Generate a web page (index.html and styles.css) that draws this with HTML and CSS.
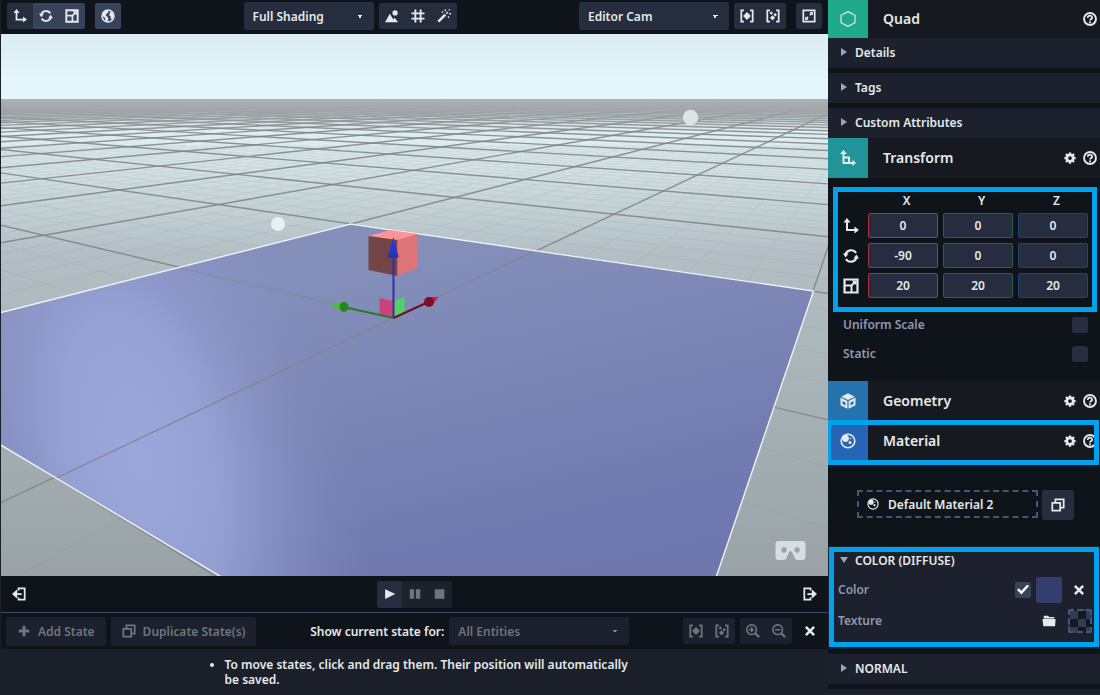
FILE: index.html
```html
<!DOCTYPE html>
<html lang="en">
<head>
    <meta charset="UTF-8">
    <meta name="viewport" content="width=device-width, initial-scale=1.0">
    <title>Scene Editor</title>
    <link rel="stylesheet" href="styles.css">
</head>
<body>
    <!-- icon set -->
    <svg class="sprite" aria-hidden="true">
        <symbol id="i-move" viewBox="0 0 16 16"><path d="M4 4v8h8" fill="none" stroke="currentColor" stroke-width="2"/><path d="M4 0L.5 4.500h7zM16 12l-4.500-3.500v7z" fill="currentColor"/></symbol>
        <symbol id="i-rotate" viewBox="0 0 16 16"><path d="M2.400 7A5.800 5.800 0 0 1 13 5M13.600 9A5.800 5.800 0 0 1 3 11" fill="none" stroke="currentColor" stroke-width="2.200"/><path d="M0 5.500h5.600L2.600 9.500zM10.400 10.500H16l-2.600-4z" fill="currentColor"/></symbol>
        <symbol id="i-scale" viewBox="0 0 16 16"><path d="M1.500 1.500h13v13h-13z" fill="none" stroke="currentColor" stroke-width="2.200"/><path d="M2 7.500h6.500V14M8.500 7.500l4-4" fill="none" stroke="currentColor" stroke-width="2"/><path d="M8.500 2.500h5V7.500z" fill="currentColor"/></symbol>
        <symbol id="i-globe" viewBox="0 0 16 16"><circle cx="8" cy="8" r="6.800" fill="none" stroke="currentColor" stroke-width="1.800"/><path d="M2 5l3-3 3-.5.5 2.500L6.500 5l-1 2.500L7.500 9l1 2-1 3.500L5 13l-.5-3L2 8zM10 4l2-1 2.500 4-.5 3-2 2-1-1.500.5-1.500-2-1.500z" fill="currentColor"/></symbol>
        <symbol id="i-image" viewBox="0 0 16 16"><path d="M0 15l5.500-9.500L9.500 12l1.500-2 4 5z" fill="currentColor"/><circle cx="11.500" cy="4.500" r="3" fill="currentColor"/></symbol>
        <symbol id="i-grid" viewBox="0 0 16 16"><path d="M5 .5v15M11 .5v15M.5 5h15M.5 11h15" stroke="currentColor" stroke-width="2.200"/></symbol>
        <symbol id="i-wand" viewBox="0 0 16 16"><path d="M1.500 14.500l8-8" stroke="currentColor" stroke-width="3"/><path d="M10.500 5.500l2-2M9.500 .5v2M14.500 .5l-1 1M14 5.500h2M12.500 8.500l1.200 1.500M5.500 3l1.500 1" stroke="currentColor" stroke-width="1.600"/></symbol>
        <symbol id="i-focus" viewBox="0 0 16 16"><path d="M4.500 1.500h-3v13h3M11.500 1.500h3v13h-3" fill="none" stroke="currentColor" stroke-width="2"/><path d="M8 3.500l4.500 4.500L8 12.500 3.500 8z" fill="currentColor"/></symbol>
        <symbol id="i-focusall" viewBox="0 0 16 16"><path d="M4.500 1.500h-3v13h3M11.500 1.500h3v13h-3" fill="none" stroke="currentColor" stroke-width="2"/><path d="M6 2.500l2 2-2 2-2-2zM10.500 4.500l2 2-2 2-2-2zM7.500 7l3 3-3 3-3-3z" fill="currentColor"/></symbol>
        <symbol id="i-expand" viewBox="0 0 16 16"><path d="M1.500 1.500h13v13h-13z" fill="none" stroke="currentColor" stroke-width="2"/><path d="M8.500 3.500h4v4zM3.500 8.500v4h4z" fill="currentColor"/><path d="M11 5L9 7M7 9l-2 2" stroke="currentColor" stroke-width="2"/></symbol>
        <symbol id="i-help" viewBox="0 0 16 16"><circle cx="8" cy="8" r="6.800" fill="none" stroke="currentColor" stroke-width="2.200"/><path d="M5.600 6.600a2.400 2.200 0 1 1 3.600 1.600Q8 8.700 8 9.800" fill="none" stroke="currentColor" stroke-width="2"/><circle cx="8" cy="11.800" r="1.200" fill="currentColor"/></symbol>
        <symbol id="i-gear" viewBox="0 0 16 16"><circle cx="8" cy="8" r="4.300" fill="none" stroke="currentColor" stroke-width="3.600"/><path d="M8 .5v3M8 12.500v3M.5 8h3M12.500 8h3M2.600 2.600l2 2M11.400 11.400l2 2M2.600 13.400l2-2M11.400 4.600l2-2" stroke="currentColor" stroke-width="3"/></symbol>
        <symbol id="i-hexagon" viewBox="0 0 16 16"><path d="M8 .6l7 3.700v7.400l-7 3.700-7-3.700V4.300z" fill="none" stroke="currentColor" stroke-width="1.200"/></symbol>
        <symbol id="i-transform" viewBox="0 0 16 16"><path d="M3.500 3v10h10M3.500 7.500h5.500v5" fill="none" stroke="currentColor" stroke-width="2"/><path d="M3.500 0L0 4h7zM16 13L12.500 9.500v6.500z" fill="currentColor"/></symbol>
        <symbol id="i-cube" viewBox="0 0 16 16"><path d="M8 .3L14.800 3.700 8 7 1.200 3.700zM.5 4.600L7.400 8v7.800L.5 12.300zM15.500 4.600L8.600 8v7.800l6.900-3.500z" fill="currentColor"/><path d="M2.500 8l3 1.500v3l-3-1.500zM13.500 8l-3 1.500v3l3-1.500z" fill="#2472ae"/></symbol>
        <symbol id="i-sphere" viewBox="0 0 16 16"><circle cx="8" cy="8" r="6.800" fill="none" stroke="currentColor" stroke-width="1.600"/><circle cx="5.500" cy="5.500" r="3.400" fill="currentColor"/><circle cx="10" cy="9.500" r="1.500" fill="currentColor"/><circle cx="10.500" cy="5.500" r=".8" fill="currentColor"/></symbol>
        <symbol id="i-copy" viewBox="0 0 16 16"><path d="M1.500 5.500h9v9h-9zM5 4.500v-3h9.500v9.500h-3" fill="none" stroke="currentColor" stroke-width="2"/></symbol>
        <symbol id="i-folder" viewBox="0 0 16 16"><path d="M2 2h5l1 1.500h6V5H2zM.5 5.800h15L15 14H1.500z" fill="currentColor"/></symbol>
        <symbol id="i-close" viewBox="0 0 16 16"><path d="M2.500 2.500l11 11M13.500 2.500l-11 11" stroke="currentColor" stroke-width="3.400"/></symbol>
        <symbol id="i-plus" viewBox="0 0 16 16"><path d="M8 2v12M2 8h12" stroke="currentColor" stroke-width="3.400"/></symbol>
        <symbol id="i-left" viewBox="0 0 16 16"><path d="M7.500 4V1.500h7v13h-7V12M4 8h7" fill="none" stroke="currentColor" stroke-width="2"/><path d="M6 2.500v11L0 8z" fill="currentColor"/></symbol>
        <symbol id="i-right" viewBox="0 0 16 16"><path d="M8.500 4V1.500h-7v13h7V12M12 8H5" fill="none" stroke="currentColor" stroke-width="2"/><path d="M10 2.500v11L16 8z" fill="currentColor"/></symbol>
        <symbol id="i-play" viewBox="0 0 16 16"><path d="M1.500 1.500L15 8 1.500 14.500z" fill="currentColor"/></symbol>
        <symbol id="i-pause" viewBox="0 0 16 16"><path d="M2 2.500h5v11H2zM9 2.500h5v11H9z" fill="currentColor"/></symbol>
        <symbol id="i-stop" viewBox="0 0 16 16"><path d="M2 2.500h11v11H2z" fill="currentColor"/></symbol>
        <symbol id="i-zoomin" viewBox="0 0 16 16"><circle cx="6.500" cy="6.500" r="5.500" fill="none" stroke="currentColor" stroke-width="1.800"/><path d="M10 10l5 5" stroke="currentColor" stroke-width="2.500"/><path d="M3.500 6.500h6M6.500 3.500v6" stroke="currentColor" stroke-width="1.800"/></symbol>
        <symbol id="i-zoomout" viewBox="0 0 16 16"><circle cx="6.500" cy="6.500" r="5.500" fill="none" stroke="currentColor" stroke-width="1.800"/><path d="M10 10l5 5" stroke="currentColor" stroke-width="2.500"/><path d="M3.500 6.500h6" stroke="currentColor" stroke-width="1.800"/></symbol>
    </svg>

    <div class="editor">
        <main class="workspace">
            <div class="toolbar">
                <div class="tools">
                    <div class="btn-group lit">
                        <button class="active" aria-label="Translate"><svg class="icon"><use href="#i-move"/></svg></button>
                        <button aria-label="Rotate"><svg class="icon"><use href="#i-rotate"/></svg></button>
                        <button aria-label="Scale"><svg class="icon"><use href="#i-scale"/></svg></button>
                    </div>
                    <div class="btn-group lit">
                        <button aria-label="World space"><svg class="icon"><use href="#i-globe"/></svg></button>
                    </div>
                </div>
                <div class="tools tight">
                    <select class="dropdown shading" aria-label="Shading"><option>Full Shading</option></select>
                    <div class="btn-group">
                        <button aria-label="Skybox"><svg class="icon"><use href="#i-image"/></svg></button>
                        <button aria-label="Grid"><svg class="icon"><use href="#i-grid"/></svg></button>
                        <button aria-label="Post effects"><svg class="icon"><use href="#i-wand"/></svg></button>
                    </div>
                </div>
                <div class="tools">
                    <div class="tools tight">
                        <select class="dropdown camera" aria-label="Camera"><option>Editor Cam</option></select>
                        <div class="btn-group">
                            <button aria-label="Frame selected"><svg class="icon"><use href="#i-focus"/></svg></button>
                            <button aria-label="Frame all"><svg class="icon"><use href="#i-focusall"/></svg></button>
                        </div>
                    </div>
                    <div class="btn-group">
                        <button aria-label="Fullscreen"><svg class="icon"><use href="#i-expand"/></svg></button>
                    </div>
                </div>
            </div>

            <div class="viewport">
                <svg class="scene" viewBox="0 34 828 542" preserveAspectRatio="xMidYMid slice">
                    <defs>
                        <linearGradient id="sky" x1="0" y1="0" x2="0" y2="1">
                            <stop offset="0" stop-color="#dbecf4"/><stop offset="0.7" stop-color="#e3f6fa"/><stop offset="1" stop-color="#e3f8fb"/>
                        </linearGradient>
                        <linearGradient id="ground" x1="0" y1="0" x2="0" y2="1">
                            <stop offset="0" stop-color="#e0f2f6"/><stop offset="0.1" stop-color="#dbecee"/><stop offset="0.2" stop-color="#c8d6da"/><stop offset="0.32" stop-color="#b3bfc4"/><stop offset="1" stop-color="#98a2a7"/>
                        </linearGradient>
                        <linearGradient id="haze" x1="0" y1="0" x2="0" y2="1">
                            <stop offset="0" stop-color="#b2babc" stop-opacity="0.9"/><stop offset="0.4" stop-color="#aeb7b9" stop-opacity="0.6"/><stop offset="1" stop-color="#b2babc" stop-opacity="0"/>
                        </linearGradient>
                        <linearGradient id="floor" gradientUnits="userSpaceOnUse" x1="480" y1="230" x2="560" y2="576">
                            <stop offset="0" stop-color="#848fba"/><stop offset="0.4" stop-color="#7b86b5"/><stop offset="0.75" stop-color="#727cb1"/><stop offset="1" stop-color="#6e78af"/>
                        </linearGradient>
                        <radialGradient id="glow" gradientUnits="userSpaceOnUse" cx="0" cy="0" r="1" gradientTransform="translate(140 460) rotate(-14) scale(215 420)">
                            <stop offset="0" stop-color="#9ca7db"/><stop offset="0.35" stop-color="#97a2d7" stop-opacity="0.9"/><stop offset="0.7" stop-color="#8a95c8" stop-opacity="0.4"/><stop offset="1" stop-color="#7d88b9" stop-opacity="0"/>
                        </radialGradient>
                    </defs>
                    <rect y="34" width="828" height="66" fill="url(#sky)"/>
                    <rect y="100" width="828" height="476" fill="url(#ground)"/>
                    <g id="minor" stroke="#7e898e" stroke-width="1" opacity="0.12"></g>
                    <g id="major" stroke="#828385" stroke-width="1.4"></g>
                    <rect y="99" width="828" height="32" fill="url(#haze)"/>

                    <polygon points="350,224 813,291 632,823 -155,352" fill="url(#floor)"/>
                    <polygon points="350,224 813,291 632,823 -155,352" fill="url(#glow)"/>
                    <g stroke="#84868f" fill="none">
                        <path d="M56 478L534 251" stroke-width="1.3"/>
                        <path d="M180 268L393 318" opacity="0.6"/>
                        <path d="M393 318L774 408" opacity="0.08"/>
                    </g>
                    <polygon points="350,224 813,291 632,823 -155,352" fill="none" stroke="#eef4f8" stroke-width="1.4"/>

                    <circle cx="277.500" cy="224" r="7" fill="#e9f0f2"/>
                    <circle cx="690" cy="117.500" r="7.700" fill="#dfe2e3"/>

                    <!-- cube -->
                    <polygon points="368,236 390,230 417,234 397,241" fill="#ff9494"/>
                    <polygon points="368,236 397,240 397,276 368,270" fill="#744548"/>
                    <polygon points="397,240 417,234 417,268 397,276" fill="#de7479"/>

                    <!-- move gizmo -->
                    <polygon points="379,298 393,301 393,318 379,315" fill="#c9427c"/>
                    <polygon points="393,301 404,297 404,313 393,318" fill="#55cf67"/>
                    <path d="M393 318L343 307" stroke="#2d7a25" stroke-width="2"/>
                    <path d="M393 318L430 301" stroke="#6d1023" stroke-width="2"/>
                    <path d="M393 318V252" stroke="#2833a5" stroke-width="2"/>
                    <polygon points="330,304 344,302 343,312" fill="#3fc531"/>
                    <ellipse cx="343.500" cy="307" rx="4.500" ry="5" fill="#2c831f"/>
                    <polygon points="438,297 426,297 431,306" fill="#d31a3e"/>
                    <circle cx="428.500" cy="302" r="5" fill="#7b1027"/>
                    <polygon points="393,237 387,257 398,257" fill="#2437d6"/>
                    <ellipse cx="392.500" cy="256" rx="5.500" ry="2.500" fill="#28379f"/>

                    <!-- VR headset -->
                    <path d="M778 541h24q3 0 3 3v13q0 3-3 3h-5q-2 0-3-2l-2-5q-2-4-4 0l-2 5q-1 2-3 2h-5q-3 0-3-3v-13q0-3 3-3zM783.500 547a2.700 3 0 1 0 .1 0zM796.500 547a2.700 3 0 1 0 .1 0z" fill="#d8dddf" fill-rule="evenodd"/>
                </svg>
            </div>

            <div class="transport">
                <button class="icon-btn" aria-label="Collapse left panel"><svg class="icon"><use href="#i-left"/></svg></button>
                <div class="btn-group playback">
                    <button class="active" aria-label="Play"><svg class="icon small"><use href="#i-play"/></svg></button>
                    <button disabled aria-label="Pause"><svg class="icon"><use href="#i-pause"/></svg></button>
                    <button disabled aria-label="Stop"><svg class="icon"><use href="#i-stop"/></svg></button>
                </div>
                <button class="icon-btn" aria-label="Collapse right panel"><svg class="icon"><use href="#i-right"/></svg></button>
            </div>

            <div class="statebar">
                <div class="tools tight">
                    <button class="text-btn" disabled><svg class="icon"><use href="#i-plus"/></svg>Add State</button>
                    <button class="text-btn" disabled><svg class="icon"><use href="#i-copy"/></svg>Duplicate State(s)</button>
                </div>
                <div class="tools tight">
                    <label for="entities">Show current state for:</label>
                    <select id="entities" class="dropdown entities" disabled><option>All Entities</option></select>
                </div>
                <div class="tools tight">
                    <div class="btn-group dim">
                        <button disabled aria-label="Frame selected"><svg class="icon"><use href="#i-focus"/></svg></button>
                        <button disabled aria-label="Frame all"><svg class="icon"><use href="#i-focusall"/></svg></button>
                    </div>
                    <div class="btn-group dim">
                        <button disabled aria-label="Zoom in"><svg class="icon"><use href="#i-zoomin"/></svg></button>
                        <button disabled aria-label="Zoom out"><svg class="icon"><use href="#i-zoomout"/></svg></button>
                    </div>
                    <button class="icon-btn" aria-label="Close"><svg class="icon small"><use href="#i-close"/></svg></button>
                </div>
            </div>

            <div class="notes">
                <ul>
                    <li>To move states, click and drag them. Their position will automatically be saved.</li>
                </ul>
            </div>
        </main>

        <aside class="inspector">
            <header class="component first">
                <span class="badge green"><svg class="icon large"><use href="#i-hexagon"/></svg></span>
                <h2>Quad</h2>
                <button class="mini" aria-label="Help"><svg class="icon"><use href="#i-help"/></svg></button>
            </header>
            <div class="sections">
                <button class="section">Details</button>
                <button class="section">Tags</button>
                <button class="section">Custom Attributes</button>
            </div>

            <header class="component">
                <span class="badge teal"><svg class="icon large"><use href="#i-transform"/></svg></span>
                <h2>Transform</h2>
                <button class="mini" aria-label="Settings"><svg class="icon small"><use href="#i-gear"/></svg></button>
                <button class="mini" aria-label="Help"><svg class="icon"><use href="#i-help"/></svg></button>
            </header>
            <div class="transform">
                <div class="axes highlight">
                    <span></span><span class="axis">X</span><span class="axis">Y</span><span class="axis">Z</span>
                    <svg class="icon large"><use href="#i-move"/></svg>
                    <input class="x" type="text" value="0" aria-label="Translate X">
                    <input class="y" type="text" value="0" aria-label="Translate Y">
                    <input class="z" type="text" value="0" aria-label="Translate Z">
                    <svg class="icon large"><use href="#i-rotate"/></svg>
                    <input class="x" type="text" value="-90" aria-label="Rotate X">
                    <input class="y" type="text" value="0" aria-label="Rotate Y">
                    <input class="z" type="text" value="0" aria-label="Rotate Z">
                    <svg class="icon large"><use href="#i-scale"/></svg>
                    <input class="x" type="text" value="20" aria-label="Scale X">
                    <input class="y" type="text" value="20" aria-label="Scale Y">
                    <input class="z" type="text" value="20" aria-label="Scale Z">
                </div>
                <div class="option"><label for="uniform">Uniform Scale</label><input id="uniform" type="checkbox"></div>
                <div class="option"><label for="static">Static</label><input id="static" type="checkbox"></div>
            </div>

            <header class="component">
                <span class="badge blue"><svg class="icon large"><use href="#i-cube"/></svg></span>
                <h2>Geometry</h2>
                <button class="mini" aria-label="Settings"><svg class="icon small"><use href="#i-gear"/></svg></button>
                <button class="mini" aria-label="Help"><svg class="icon"><use href="#i-help"/></svg></button>
            </header>
            <header class="component highlight wide">
                <span class="badge royal"><svg class="icon large"><use href="#i-sphere"/></svg></span>
                <h2>Material</h2>
                <button class="mini" aria-label="Settings"><svg class="icon small"><use href="#i-gear"/></svg></button>
                <button class="mini" aria-label="Help"><svg class="icon"><use href="#i-help"/></svg></button>
            </header>
            <div class="material">
                <button class="slot"><svg class="icon small"><use href="#i-sphere"/></svg>Default Material 2</button>
                <button class="duplicate" aria-label="Duplicate material"><svg class="icon"><use href="#i-copy"/></svg></button>
            </div>

            <div class="sections">
                <div class="diffuse highlight">
                    <button class="section open">COLOR (DIFFUSE)</button>
                    <div class="prop">
                        <label for="use-color">Color</label>
                        <input id="use-color" type="checkbox" checked>
                        <button class="swatch" aria-label="Pick color"></button>
                        <button class="icon-btn" aria-label="Clear color"><svg class="icon small"><use href="#i-close"/></svg></button>
                    </div>
                    <div class="prop">
                        <span>Texture</span>
                        <button class="icon-btn" aria-label="Browse texture"><svg class="icon"><use href="#i-folder"/></svg></button>
                        <button class="texture" aria-label="Texture slot"></button>
                    </div>
                </div>
                <button class="section">NORMAL</button>
                <button class="section empty" aria-label="Next section"></button>
            </div>
        </aside>
    </div>

    <script src="scene.js"></script>
</body>
</html>
```
FILE: styles.css
```css
* {
    box-sizing: border-box;
}

body {
    margin: 0;
    background: #0f141a;
    color: #e6e9ea;
    font-family: "Noto Sans", "Open Sans", sans-serif;
    font-size: 12px;
    font-weight: 600;
    overflow: hidden;
}

button, input, select {
    font: inherit;
    color: inherit;
    margin: 0;
    padding: 0;
    border: none;
    background: none;
}

button {
    display: flex;
    align-items: center;
    justify-content: center;
    cursor: pointer;
}

.sprite {
    position: absolute;
    width: 0;
    height: 0;
}

.icon {
    display: block;
    width: 14px;
    height: 14px;
    flex: none;
}

.icon.small {
    width: 12px;
    height: 12px;
}

.icon.large {
    width: 16px;
    height: 16px;
}

.editor {
    display: grid;
    grid-template-columns: minmax(0, 1fr) 272px;
    height: 100vh;
}

/* ---- workspace ---- */

.workspace {
    display: flex;
    flex-direction: column;
    min-height: 0;
    border-left: 1px solid #1a1f2a;
}

.toolbar {
    display: flex;
    align-items: center;
    justify-content: space-between;
    height: 34px;
    padding: 0 6px 2px;
}

.tools {
    display: flex;
    align-items: center;
    gap: 10px;
}

.tools.tight {
    gap: 5px;
}

.btn-group {
    display: flex;
    overflow: hidden;
    border-radius: 2px;
    background: #252d3e;
}

.btn-group button {
    width: 26px;
    height: 26px;
}

.btn-group.lit {
    background: #37425b;
}

.btn-group .active {
    background: #252d3e;
}

.btn-group.dim,
.btn-group.playback {
    background: #1b212d;
}

.btn-group.playback button {
    width: 25px;
    height: 27px;
}

button:disabled,
select:disabled {
    color: #6f757c;
    opacity: 1;
    cursor: default;
}

.dropdown {
    appearance: none;
    height: 28px;
    padding: 0 9px;
    border-radius: 2px;
    background-color: #252d3e;
    background-image: conic-gradient(from -45deg at 50% 3px, #e6e9ea 90deg, transparent 0);
    background-repeat: no-repeat;
    background-position: right 11px center;
    background-size: 6px 3px;
}

.shading {
    width: 130px;
}

.camera {
    width: 150px;
}

.entities {
    width: 180px;
    background-color: #1b212d;
    background-image: conic-gradient(from -45deg at 50% 3px, #8b9096 90deg, transparent 0);
}

.viewport {
    flex: 1;
    min-height: 0;
}

.scene {
    display: block;
    width: 100%;
    height: 100%;
}

.icon-btn {
    width: 26px;
    height: 26px;
}

.transport {
    display: flex;
    align-items: center;
    justify-content: space-between;
    height: 37px;
    padding: 0 5px;
    border-bottom: 1px solid #3d4b6b;
}

.statebar {
    display: flex;
    align-items: center;
    justify-content: space-between;
    height: 36px;
    padding: 0 5px;
}

.text-btn {
    gap: 7px;
    height: 29px;
    padding: 0 11px;
    border-radius: 2px;
    background: #1b212d;
}

.notes {
    height: 46px;
    background: #1a1f2a;
}

.notes ul {
    width: 450px;
    margin: 8px auto 0;
    padding: 0 0 0 35px;
    line-height: 15px;
}

/* ---- inspector ---- */

.inspector {
    min-height: 0;
    overflow: hidden;
}

.component {
    display: flex;
    align-items: center;
    height: 40px;
    padding-right: 3px;
    background: #16191f;
}

.component.first {
    height: 38px;
}

.component h2 {
    flex: 1;
    margin: 0 0 0 15px;
    padding-bottom: 2px;
    font-size: 14px;
    font-weight: 600;
}

.badge {
    display: flex;
    align-items: center;
    justify-content: center;
    align-self: stretch;
    width: 40px;
}

.green { background: #1fab89; }
.teal { background: #209496; }
.blue { background: #2472ae; }
.royal { background: #2665b5; }

.mini {
    width: 14px;
    height: 20px;
    margin-left: 6px;
}

.sections {
    display: flex;
    flex-direction: column;
    gap: 5px;
}

.section {
    justify-content: flex-start;
    gap: 8px;
    width: 100%;
    height: 30px;
    padding: 0 0 2px 13px;
    background: #1c212d;
}

.section::before {
    content: "";
    width: 6px;
    height: 8px;
    background: #9aa3c4;
    clip-path: polygon(0 0, 100% 50%, 0 100%);
}

.section.open {
    height: 28px;
    padding-bottom: 0;
}

.section.open::before {
    width: 8px;
    height: 6px;
    margin: 0 -1px;
    clip-path: polygon(0 0, 100% 0, 50% 100%);
}

.section.empty::before {
    display: none;
}

.highlight {
    position: relative;
}

.highlight::after {
    content: "";
    position: absolute;
    inset: 0;
    border: 5px solid #00a2ed;
    pointer-events: none;
}

.transform {
    height: 203px;
    padding: 9px 3px 0 5px;
}

.axes {
    display: grid;
    grid-template-columns: 20px repeat(3, minmax(0, 1fr));
    gap: 5px;
    align-items: center;
    padding: 5px 9px 14px 10px;
}

.axes .axis {
    height: 16px;
    padding-left: 7px;
    line-height: 18px;
    text-align: center;
}

.axes input {
    width: 100%;
    height: 25px;
    border: 1px solid;
    border-radius: 2px;
    background: #252d3e;
    text-align: center;
}

.axes .x { border-color: #b23234; }
.axes .y { border-color: #2f5f48; }
.axes .z { border-color: #264273; }

.option {
    display: flex;
    align-items: center;
    justify-content: space-between;
    height: 29px;
    padding: 0 9px 4px 10px;
    color: #8f98b3;
}

input[type="checkbox"] {
    appearance: none;
    display: grid;
    place-items: center;
    width: 16px;
    height: 16px;
    border-radius: 2px;
    background: #252d3e;
}

input[type="checkbox"]:checked {
    background: #37425b;
}

input[type="checkbox"]:checked::before {
    content: "";
    width: 12px;
    height: 10px;
    background: #f2f4f5;
    clip-path: polygon(0 55%, 15% 38%, 36% 62%, 86% 0, 100% 15%, 38% 100%);
}

.highlight.wide::after {
    inset: -1px 1px -4px -2px;
}

.material {
    display: flex;
    gap: 4px;
    height: 85px;
    padding: 29px 26px 0 29px;
}

.slot {
    flex: 1;
    justify-content: flex-start;
    gap: 9px;
    height: 28px;
    padding-left: 8px;
    border: 2px dashed #46557a;
}

.duplicate {
    width: 32px;
    height: 30px;
    border-radius: 2px;
    background: #252d3e;
}

.diffuse {
    height: 103px;
    background: #1c212d;
}

.diffuse::after {
    inset: 1px 1px 2px;
}

.prop {
    display: flex;
    align-items: center;
    height: 31px;
    padding: 0 8px 0 10px;
    color: #8f98b3;
}

.prop label,
.prop span {
    flex: 1;
}

.prop button {
    color: #e6e9ea;
}

.prop .icon-btn {
    margin-left: 4px;
}

.prop .swatch {
    width: 26px;
    height: 26px;
    margin-left: 5px;
    border-radius: 2px;
    background: #343e6e;
}

.prop .texture {
    width: 24px;
    height: 24px;
    margin-left: 6px;
    border: 2px dashed #46557a;
    border-radius: 2px;
    background: conic-gradient(#14181f 25%, #303b54 0 50%, #14181f 0 75%, #303b54 0) 2px 2px / 16px 16px border-box;
}
```
FILE: scene.js
```javascript
// Ground grid seen through the editor camera. p and q are counted in major cells.
var HORIZON = 88;
var FAR = 19.6;
var NEAR = 0.3;

function project(p, q) {
    var w = depth(p, q);
    return [(393.5 + 163 * p + 361.6 * q) / w, HORIZON + 229.7 / w];
}

function depth(p, q) {
    return 1 - 0.28 * p + 0.41 * q;
}

function addLine(group, a, b, opacity) {
    var line = document.createElementNS('http://www.w3.org/2000/svg', 'line');
    line.setAttribute('x1', a[0].toFixed(1));
    line.setAttribute('y1', a[1].toFixed(1));
    line.setAttribute('x2', b[0].toFixed(1));
    line.setAttribute('y2', b[1].toFixed(1));
    line.setAttribute('opacity', opacity);
    group.appendChild(line);
}

// constant p, clipped between the near and far depth
function lineP(group, p, far, opacity) {
    var q1 = (NEAR - 1 + 0.28 * p) / 0.41;
    var q2 = (far - 1 + 0.28 * p) / 0.41;
    addLine(group, project(p, q1), project(p, q2), opacity);
}

// constant q
function lineQ(group, q, far, opacity) {
    var p1 = (1 + 0.41 * q - NEAR) / 0.28;
    var p2 = (1 + 0.41 * q - far) / 0.28;
    addLine(group, project(p1, q), project(p2, q), opacity);
}

var major = document.getElementById('major');
var minor = document.getElementById('minor');

for (var i = -44; i <= 46; i++) {
    lineP(major, i, FAR, 0.85);
    lineQ(major, i, FAR, 0.85);
}

for (var k = -60; k <= 60; k++) {
    lineP(minor, k / 5, 4, 1);
    lineQ(minor, k / 5, 4, 1);
}
```
